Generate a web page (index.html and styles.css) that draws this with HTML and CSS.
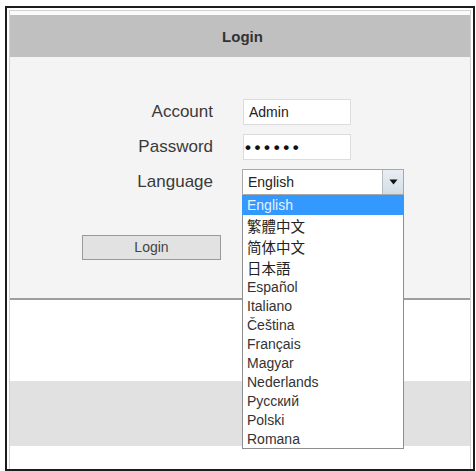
FILE: index.html
```html
<!DOCTYPE html>
<html>
<head>
<meta charset="utf-8">
<link rel="stylesheet" href="styles.css">
</head>
<body>
<div class="frame">
  <div class="panel">
    <div class="header">Login</div>
    <div class="form-area">
      <div class="form-grid">
        <div class="label">Account</div>
        <div class="field input">Admin</div>
        <div class="label">Password</div>
        <div class="field input dots">••••••</div>
        <div class="label">Language</div>
        <div class="field select">
          <span class="select-text">English</span>
          <span class="select-btn">
            <svg width="9" height="6" viewBox="0 0 9 6"><path d="M0.5 0.5 H8.5 L4.5 5.5 Z" fill="#111"/></svg>
          </span>
        </div>
      </div>
      <div class="btn-row"><div class="btn">Login</div></div>
    </div>
    <div class="white-gap"></div>
    <div class="band"></div>
    <div class="bottom-gap"></div>
  </div>
  <ul class="dropdown">
    <li class="sel">English</li>
    <li class="cjk">繁體中文</li>
    <li class="cjk sc">简体中文</li>
    <li class="cjk jp">日本語</li>
    <li>Español</li>
    <li>Italiano</li>
    <li>Čeština</li>
    <li>Français</li>
    <li>Magyar</li>
    <li>Nederlands</li>
    <li>Русский</li>
    <li>Polski</li>
    <li>Romana</li>
  </ul>
</div>
</body>
</html>
```

FILE: styles.css
```css
* { box-sizing: border-box; }
html, body { margin: 0; padding: 0; background: #ffffff; }
body {
  font-family: "Liberation Sans", Arial, sans-serif;
  color: #333;
  width: 476px;
  height: 471px;
  overflow: hidden;
}
.frame {
  position: relative;
  margin: 6px 0 0 5px;
  width: 470px;
  height: 465px;
  border: 2px solid #1c1c1c;
  background: #fff;
  display: flex;
  flex-direction: column;
}
.panel {
  flex: 1;
  margin: 2px 2px 0 2px;
  border: 1px solid #d2d2d2;
  border-bottom: none;
  padding-top: 4px;
  display: flex;
  flex-direction: column;
  background: #fafafa;
}
.header {
  height: 42px;
  background: #c0c0c0;
  display: flex;
  align-items: center;
  justify-content: center;
  font-weight: bold;
  font-size: 15px;
  color: #333;
  padding-left: 5px;
}
.form-area {
  height: 243px;
  background: #f4f4f4;
  border-bottom: 2px solid #9e9e9e;
  padding-top: 42px;
}
.form-grid {
  display: grid;
  grid-template-columns: 203px 161px;
  grid-auto-rows: 26px;
  column-gap: 30px;
  row-gap: 9px;
}
.label {
  text-align: right;
  font-size: 17px;
  line-height: 26px;
  color: #3a3a3a;
}
.field {
  height: 26px;
  background: #fff;
}
.input {
  width: 108px;
  border: 1px solid #dcdcdc;
  font-size: 14px;
  line-height: 24px;
  padding-left: 5px;
  color: #222;
}
.dots {
  font-size: 17px;
  font-weight: bold;
  letter-spacing: 3.6px;
  line-height: 25px;
  padding-left: 1px;
  color: #111;
}
.select {
  width: 162px;
  margin-left: -1px;
  border: 1px solid #a8a8a8;
  display: flex;
  align-items: stretch;
}
.select-text {
  flex: 1;
  font-size: 14px;
  line-height: 24px;
  padding-left: 5px;
  color: #222;
}
.select-btn {
  width: 21px;
  border-left: 1px solid #b5bcc6;
  background: linear-gradient(#e9eef3, #d3dde7);
  display: flex;
  align-items: center;
  justify-content: center;
}
.btn-row {
  padding-top: 40px;
  padding-left: 72px;
}
.btn {
  width: 139px;
  height: 25px;
  border: 1px solid #9a9a9a;
  background: #e2e2e2;
  font-size: 14px;
  line-height: 23px;
  text-align: center;
  color: #444;
}
.white-gap {
  height: 81px;
  background: #fff;
}
.band {
  height: 65px;
  background: #e1e1e1;
}
.bottom-gap {
  flex: 1;
  background: #fff;
}
.dropdown {
  position: absolute;
  left: 235px;
  top: 187px;
  width: 162px;
  height: 254px;
  margin: 0;
  padding: 0;
  list-style: none;
  background: #fff;
  border: 1px solid #8e8e8e;
  border-top: none;
}
.dropdown li {
  height: 19px;
  line-height: 19px;
  font-size: 14px;
  padding-left: 4px;
  color: #333;
  white-space: nowrap;
}
.dropdown li.sel {
  height: 20px;
  line-height: 20px;
  background: #3399ff;
  color: #e6f3ff;
  margin: 0 -1px;
  padding-left: 5px;
}
.dropdown li.cjk {
  height: 21px;
  line-height: 21px;
  font-size: 14.5px;
  font-family: "Noto Sans CJK TC", "Noto Sans CJK SC", sans-serif;
  color: #222;
}
.dropdown li.cjk.sc { font-family: "Noto Sans CJK SC", sans-serif; }
.dropdown li.cjk.jp { font-family: "Noto Sans CJK JP", sans-serif; }
```
